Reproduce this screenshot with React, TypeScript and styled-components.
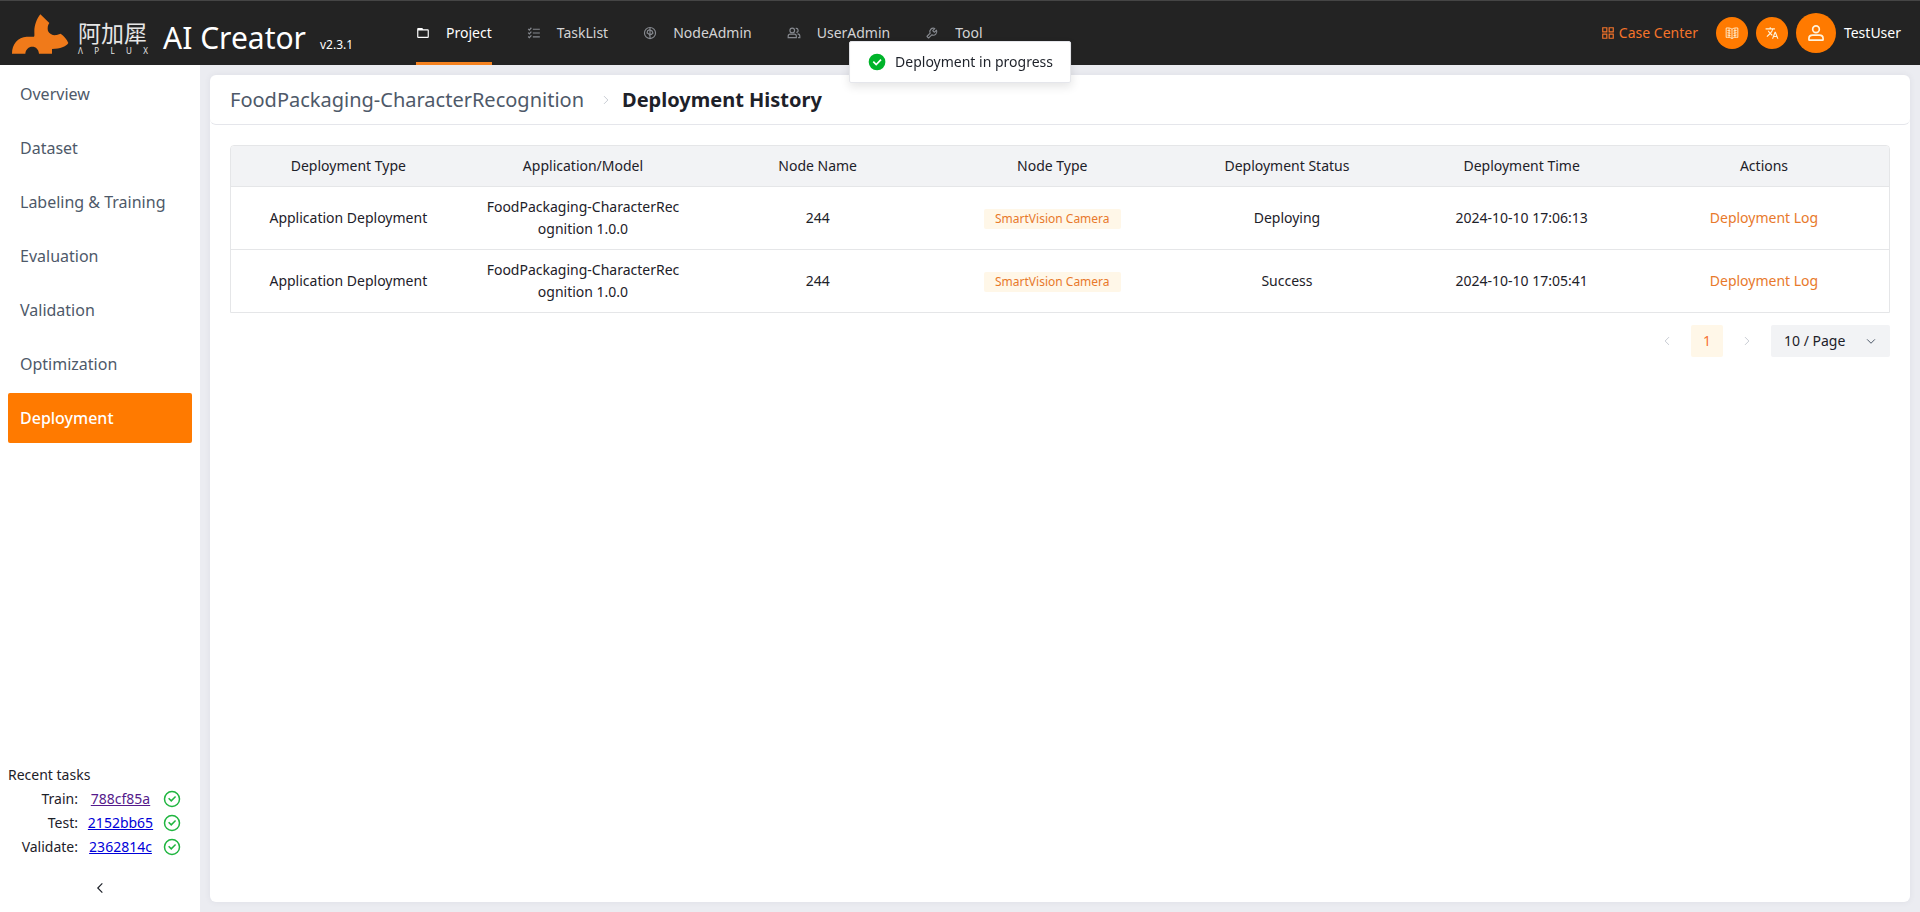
import React from 'react';
import styled, { createGlobalStyle } from 'styled-components';
import { MdTranslate } from 'react-icons/md';

const GlobalStyle = createGlobalStyle`
  *, *::before, *::after { box-sizing: border-box; }
  body {
    margin: 0;
    background: #ebecf1;
    color: #1d2129;
    font-family: 'Noto Sans', 'Noto Sans CJK SC', sans-serif;
    font-size: 14px;
    line-height: 22px;
  }
  button, select { font: inherit; color: inherit; border: 0; background: none; padding: 0; margin: 0; cursor: pointer; }
  a { text-decoration: none; }
`;

const Page = styled.div`
  display: flex;
  flex-direction: column;
  min-height: 100vh;
`;

/* Icons */

const IconSvg = styled.svg<{ $size: number; $weight?: number }>`
  width: ${(p) => p.$size}px;
  height: ${(p) => p.$size}px;
  flex: none;
  display: block;
  fill: none;
  stroke: currentColor;
  stroke-width: ${(p) => p.$weight ?? 4};
`;

type IconProps = { size: number; weight?: number; children: React.ReactNode };

const Icon = ({ size, weight, children }: IconProps) => (
  <IconSvg $size={size} $weight={weight} viewBox="0 0 48 48" aria-hidden="true">
    {children}
  </IconSvg>
);

const FolderIcon = () => (
  <Icon size={14}>
    <path d="M6 13h18l-2.5-3.6a1 1 0 0 0-.9-.4H7a1 1 0 0 0-1 1v4Zm0 0h34a2 2 0 0 1 2 2v22a2 2 0 0 1-2 2H8a2 2 0 0 1-2-2V13Z" />
  </Icon>
);

const TasksIcon = () => (
  <Icon size={14}>
    <path d="M20 11h24M20 24h24M20 37h24M4 10l4 4 7-8M4 23l4 4 7-8M4 36l4 4 7-8" />
  </Icon>
);

const NodeIcon = () => (
  <Icon size={14} weight={4}>
    <circle cx="24" cy="24" r="19" />
    <path d="M24 6v36M24 12l-8 4-2 8 6 3 4 7M24 14l7 3 3 7-5 5-5-1" />
  </Icon>
);

const UsersIcon = () => (
  <Icon size={14}>
    <circle cx="18" cy="15" r="8" />
    <path d="M4 40v-5c0-4 3-7 7-7h14c4 0 7 3 7 7v5H4ZM30 8a7 7 0 0 1 2 14M36 27c5 0 8 3 8 8v5h-6" />
  </Icon>
);

const ToolIcon = () => (
  <Icon size={14}>
    <path d="M19.994 11.035c3.66-3.659 9.094-4.46 13.531-2.405a.1.1 0 0 1 .028.16l-6.488 6.488a1 1 0 0 0 0 1.414l4.243 4.243a1 1 0 0 0 1.414 0l6.488-6.488a.1.1 0 0 1 .16.028c2.056 4.437 1.254 9.872-2.405 13.53-3.695 3.696-9.2 4.477-13.66 2.347L12.923 40.733a1 1 0 0 1-1.414 0L7.266 36.49a1 1 0 0 1 0-1.414l10.382-10.382c-2.13-4.46-1.349-9.965 2.346-13.66Z" />
  </Icon>
);

const AppsIcon = () => (
  <Icon size={14}>
    <path d="M6 6h14v14H6zM28 6h14v14H28zM6 28h14v14H6zM28 28h14v14H28z" />
  </Icon>
);

const BookIcon = () => (
  <Icon size={14} weight={3}>
    <path d="M24 11c-5-4-12-5-20-4v32c8-1 15 0 20 4 5-4 12-5 20-4V7c-8-1-15 0-20 4ZM24 11v32" />
    <path d="M14 8v31M34 8v31M8 15l11 2M8 23l11 2M8 31l11 2M40 15l-11 2M40 23l-11 2M40 31l-11 2" />
  </Icon>
);

const UserIcon = () => (
  <Icon size={20}>
    <path d="M7 37c0-4.97 4.03-8 9-8h16c4.97 0 9 3.03 9 8v3a1 1 0 0 1-1 1H8a1 1 0 0 1-1-1v-3Z" />
    <circle cx="24" cy="15" r="8" />
  </Icon>
);

const CheckCircleIcon = () => (
  <Icon size={18}>
    <path d="m15 22 7 7 11.5-11.5M44 24c0 11-9 20-20 20S4 35 4 24 13 4 24 4s20 9 20 20Z" />
  </Icon>
);

const SuccessIcon = () => (
  <Icon size={20}>
    <circle cx="24" cy="24" r="20" fill="currentColor" stroke="none" />
    <path d="m15 23 7 7 11.5-11.5" stroke="#fff" />
  </Icon>
);

const LeftIcon = ({ size = 12 }: { size?: number }) => (
  <Icon size={size}>
    <path d="M32 8.4 16.4 24 32 39.6" />
  </Icon>
);

const RightIcon = () => (
  <Icon size={12}>
    <path d="m16 39.6 15.6-15.6L16 8.4" />
  </Icon>
);

const DownIcon = () => (
  <Icon size={12}>
    <path d="M39.6 17.4 24 33 8.4 17.4" />
  </Icon>
);

/* Top bar */

const TopBar = styled.header`
  display: flex;
  align-items: stretch;
  height: 65px;
  border-top: 1px solid #454545;
  background: #232323;
  color: #fff;
`;

const Brand = styled.a`
  display: flex;
  align-items: center;
  flex: none;
  width: 416px;
  padding: 2px 0 0 10px;
  color: #fff;
`;

const RhinoLogo = styled.svg`
  width: 60px;
  height: 42px;
  flex: none;
`;

const CompanyName = styled.span`
  display: flex;
  flex-direction: column;
  flex: none;
  width: 93px;
  padding: 8px 0 0 8px;
  color: #e6e6e6;
`;

const CompanyChinese = styled.span`
  font-family: 'Noto Sans CJK SC', sans-serif;
  font-size: 23px;
  font-weight: 400;
  line-height: 25px;
`;

const CompanyLatin = styled.span`
  display: flex;
  justify-content: space-between;
  width: 70px;
  font-size: 8px;
  line-height: 11px;
`;

const ProductName = styled.span`
  font-size: 30px;
  line-height: 40px;
  padding-top: 8px;
`;

const Version = styled.span`
  margin: 22px 0 0 14px;
  font-size: 12px;
  line-height: 16px;
`;

const MainNav = styled.nav`
  display: flex;
  gap: 35px;
`;

const NavLink = styled.a<{ $active?: boolean }>`
  display: flex;
  align-items: center;
  gap: 16px;
  padding-top: 3px;
  border-bottom: 3px solid ${(p) => (p.$active ? '#f58220' : 'transparent')};
  color: ${(p) => (p.$active ? '#fff' : '#d3d3d5')};

  svg { color: ${(p) => (p.$active ? '#fff' : '#86898f')}; }
`;

const UserTools = styled.div`
  display: flex;
  align-items: center;
  margin-left: auto;
  padding-right: 19px;
  gap: 8px;
`;

const CaseLink = styled.a`
  display: flex;
  align-items: center;
  gap: 4px;
  margin-right: 10px;
  color: #f5742a;
`;

const RoundButton = styled.button<{ $large?: boolean }>`
  display: flex;
  align-items: center;
  justify-content: center;
  width: ${(p) => (p.$large ? 40 : 32)}px;
  height: ${(p) => (p.$large ? 40 : 32)}px;
  border-radius: 50%;
  background: #ff7a00;
  color: #fff3dc;
`;

/* Notification */

const Toast = styled.div`
  position: fixed;
  top: 41px;
  left: 50%;
  transform: translateX(-50%);
  display: flex;
  align-items: center;
  gap: 8px;
  padding: 9px 17px;
  border: 1px solid #e5e6eb;
  border-radius: 2px;
  background: #fff;
  box-shadow: 0 4px 10px rgba(0, 0, 0, 0.1);
  white-space: nowrap;

  svg { color: #00b42a; }
`;

/* Side bar */

const Body = styled.div`
  display: flex;
  flex: 1;
`;

const SideBar = styled.aside`
  display: flex;
  flex-direction: column;
  flex: none;
  width: 200px;
  padding: 4px 8px 8px;
  background: #fff;
`;

const SideNav = styled.nav`
  display: flex;
  flex-direction: column;
  gap: 4px;
`;

const SideLink = styled.a<{ $active?: boolean }>`
  padding: 0 12px;
  border-radius: 2px;
  background: ${(p) => (p.$active ? '#ff7a00' : 'transparent')};
  color: ${(p) => (p.$active ? '#fff' : '#4e5969')};
  font-size: 16px;
  font-weight: ${(p) => (p.$active ? 500 : 400)};
  line-height: 50px;
`;

const RecentTasks = styled.section`
  margin-top: auto;
`;

const RecentTitle = styled.h2`
  margin: 0;
  font-size: 14px;
  font-weight: 400;
  line-height: 24px;
`;

const TaskRow = styled.div`
  display: grid;
  grid-template-columns: 70px 85px 18px;
  align-items: center;
  line-height: 24px;

  svg { color: #1fb53f; }
`;

const TaskLabel = styled.span`
  text-align: right;
`;

const TaskLink = styled.a<{ $visited?: boolean }>`
  justify-self: center;
  color: ${(p) => (p.$visited ? '#551a8b' : '#0000d8')};
  text-decoration: underline;
`;

const CollapseButton = styled.button`
  display: flex;
  align-items: center;
  justify-content: center;
  align-self: center;
  width: 32px;
  height: 32px;
  margin-top: 13px;
`;

/* Content */

const Main = styled.main`
  display: flex;
  flex: 1;
  min-width: 0;
  padding: 10px;
  background: #ebecf1;
`;

const Card = styled.section`
  flex: 1;
  min-width: 0;
  border-radius: 6px;
  background: #fff;
  box-shadow: 0 0 6px rgba(60, 60, 90, 0.08);
`;

const Breadcrumb = styled.nav`
  display: flex;
  align-items: center;
  height: 50px;
  padding: 0 20px;
  border-bottom: 1px solid #e5e6eb;
  border-radius: 6px;
  font-size: 20px;

  svg { margin: 0 10px 0 16px; color: #c9cdd4; }
`;

const CrumbLink = styled.a`
  color: #4e5969;
`;

const CrumbCurrent = styled.h1`
  margin: 0;
  font-size: 20px;
  font-weight: 700;
`;

const CardBody = styled.div`
  padding: 20px;
`;

const TableFrame = styled.div`
  border: 1px solid #e5e6e8;
  border-radius: 4px 4px 0 0;
  overflow: hidden;
`;

const HistoryTable = styled.table`
  width: 100%;
  border-spacing: 0;
  table-layout: fixed;
  text-align: center;
`;

const HeadCell = styled.th<{ $actions?: boolean }>`
  width: ${(p) => (p.$actions ? '250px' : 'auto')};
  height: 41px;
  padding: 0 18px;
  border-bottom: 1px solid #e5e6e8;
  background: #f2f3f5;
  font-weight: 400;
`;

const Cell = styled.td`
  height: 63px;
  padding: 9px 18px;
  border-bottom: 1px solid #e5e6e8;
  word-break: break-all;

  tr:last-child > & { border-bottom: 0; height: 62px; }
`;

const Tag = styled.span`
  display: inline-block;
  padding: 0 11px;
  border-radius: 2px;
  background: #fff7e8;
  color: #e8792b;
  font-size: 12px;
  line-height: 20px;
  vertical-align: middle;
`;

const LogLink = styled.a`
  color: #e8792b;
`;

const Pager = styled.div`
  display: flex;
  justify-content: flex-end;
  gap: 8px;
  padding-top: 12px;
`;

const PageButton = styled.button<{ $current?: boolean }>`
  display: flex;
  align-items: center;
  justify-content: center;
  width: 32px;
  height: 32px;
  border-radius: 2px;
  background: ${(p) => (p.$current ? '#fff7e8' : 'transparent')};
  color: ${(p) => (p.$current ? '#f77234' : '#c9cdd4')};
`;

const PageSize = styled.label`
  display: grid;
  align-items: center;
  width: 119px;
  height: 32px;
  border-radius: 2px;
  background: #f2f3f5;

  select, svg { grid-area: 1 / 1; }
  select { appearance: none; height: 32px; padding-left: 13px; }
  svg { justify-self: end; margin-right: 13px; color: #4e5969; pointer-events: none; }
`;

const navItems = [
  { label: 'Project', icon: <FolderIcon />, active: true },
  { label: 'TaskList', icon: <TasksIcon /> },
  { label: 'NodeAdmin', icon: <NodeIcon /> },
  { label: 'UserAdmin', icon: <UsersIcon /> },
  { label: 'Tool', icon: <ToolIcon /> },
];

const sideItems = [
  'Overview',
  'Dataset',
  'Labeling & Training',
  'Evaluation',
  'Validation',
  'Optimization',
  'Deployment',
];

const recentTasks = [
  { label: 'Train:', id: '788cf85a', visited: true },
  { label: 'Test:', id: '2152bb65' },
  { label: 'Validate:', id: '2362814c' },
];

const columns = [
  'Deployment Type',
  'Application/Model',
  'Node Name',
  'Node Type',
  'Deployment Status',
  'Deployment Time',
  'Actions',
];

const deployments = [
  { status: 'Deploying', time: '2024-10-10 17:06:13' },
  { status: 'Success', time: '2024-10-10 17:05:41' },
];

export default function App() {
  return (
    <Page>
      <GlobalStyle />
      <TopBar>
        <Brand href="#">
          <RhinoLogo viewBox="30 20 180 126" aria-hidden="true">
            <path
              fill="#f07a1a"
              d="M36 142C36 112 54 93 80 91H102C104 88 103 84 103 76C103 56 110 38 121 24L148 50C143 56 142 66 144 74C148 84 160 88 170 86L182 82C193 90 200 98 205 110C197 122 182 127 156 128V142H117C116 129 108 121 97 121C86 121 77 129 76 142Z"
            />
          </RhinoLogo>
          <CompanyName>
            <CompanyChinese>阿加犀</CompanyChinese>
            <CompanyLatin>
              {['Λ', 'P', 'L', 'U', 'X'].map((letter) => (
                <span key={letter}>{letter}</span>
              ))}
            </CompanyLatin>
          </CompanyName>
          <ProductName>AI Creator</ProductName>
          <Version>v2.3.1</Version>
        </Brand>
        <MainNav>
          {navItems.map((item) => (
            <NavLink key={item.label} href="#" $active={item.active}>
              {item.icon}
              {item.label}
            </NavLink>
          ))}
        </MainNav>
        <UserTools>
          <CaseLink href="#">
            <AppsIcon />
            Case Center
          </CaseLink>
          <RoundButton aria-label="Documentation">
            <BookIcon />
          </RoundButton>
          <RoundButton aria-label="Language">
            <MdTranslate size={14} />
          </RoundButton>
          <RoundButton $large aria-label="Account">
            <UserIcon />
          </RoundButton>
          <span>TestUser</span>
        </UserTools>
      </TopBar>

      <Body>
        <SideBar>
          <SideNav>
            {sideItems.map((label) => (
              <SideLink key={label} href="#" $active={label === 'Deployment'}>
                {label}
              </SideLink>
            ))}
          </SideNav>
          <RecentTasks>
            <RecentTitle>Recent tasks</RecentTitle>
            {recentTasks.map((task) => (
              <TaskRow key={task.id}>
                <TaskLabel>{task.label}</TaskLabel>
                <TaskLink href="#" $visited={task.visited}>
                  {task.id}
                </TaskLink>
                <CheckCircleIcon />
              </TaskRow>
            ))}
          </RecentTasks>
          <CollapseButton aria-label="Collapse menu">
            <LeftIcon size={14} />
          </CollapseButton>
        </SideBar>

        <Main>
          <Card>
            <Breadcrumb>
              <CrumbLink href="#">FoodPackaging-CharacterRecognition</CrumbLink>
              <RightIcon />
              <CrumbCurrent>Deployment History</CrumbCurrent>
            </Breadcrumb>
            <CardBody>
              <TableFrame>
                <HistoryTable>
                  <thead>
                    <tr>
                      {columns.map((name) => (
                        <HeadCell key={name} $actions={name === 'Actions'}>
                          {name}
                        </HeadCell>
                      ))}
                    </tr>
                  </thead>
                  <tbody>
                    {deployments.map((row) => (
                      <tr key={row.time}>
                        <Cell>Application Deployment</Cell>
                        <Cell>FoodPackaging-CharacterRecognition 1.0.0</Cell>
                        <Cell>244</Cell>
                        <Cell>
                          <Tag>SmartVision Camera</Tag>
                        </Cell>
                        <Cell>{row.status}</Cell>
                        <Cell>{row.time}</Cell>
                        <Cell>
                          <LogLink href="#">Deployment Log</LogLink>
                        </Cell>
                      </tr>
                    ))}
                  </tbody>
                </HistoryTable>
              </TableFrame>
              <Pager>
                <PageButton aria-label="Previous page">
                  <LeftIcon />
                </PageButton>
                <PageButton $current>1</PageButton>
                <PageButton aria-label="Next page">
                  <RightIcon />
                </PageButton>
                <PageSize>
                  <select aria-label="Rows per page" defaultValue="10">
                    <option value="10">10 / Page</option>
                    <option value="20">20 / Page</option>
                  </select>
                  <DownIcon />
                </PageSize>
              </Pager>
            </CardBody>
          </Card>
        </Main>
      </Body>

      <Toast role="status">
        <SuccessIcon />
        Deployment in progress
      </Toast>
    </Page>
  );
}
